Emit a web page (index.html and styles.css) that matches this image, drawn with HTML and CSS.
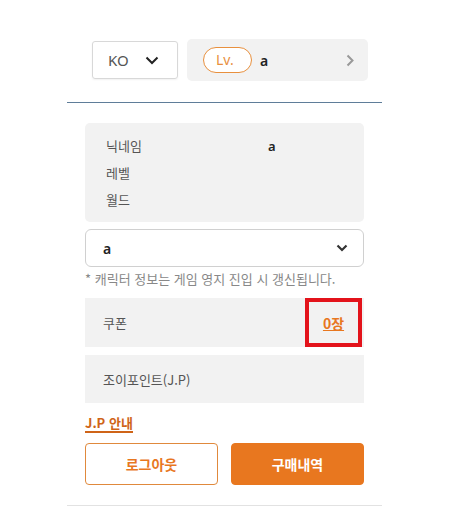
FILE: index.html
```html
<!DOCTYPE html>
<html lang="ko">
<head>
<meta charset="utf-8">
<link rel="stylesheet" href="styles.css">
</head>
<body>
<div class="panel">
  <div class="top">
    <div class="lang">
      <span class="lang-code">KO</span>
      <svg class="lang-caret" width="14" height="9" viewBox="0 0 14 9"><path d="M1.5 1.5 L7 7 L12.5 1.5" fill="none" stroke="#222" stroke-width="2"/></svg>
    </div>
    <div class="lv">
      <span class="lv-pill">Lv.</span>
      <span class="lv-name">a</span>
      <svg class="lv-arrow" width="8" height="13" viewBox="0 0 8 13"><path d="M1.5 1.5 L6.5 6.5 L1.5 11.5" fill="none" stroke="#999" stroke-width="2"/></svg>
    </div>
  </div>
  <div class="divider"></div>
  <div class="content">
    <div class="info">
      <div class="info-label">닉네임</div><div class="info-value">a</div>
      <div class="info-label">레벨</div><div class="info-value"></div>
      <div class="info-label">월드</div><div class="info-value"></div>
    </div>
    <div class="select">
      <span class="select-text">a</span>
      <svg class="select-caret" width="12" height="8" viewBox="0 0 12 8"><path d="M1.5 1.5 L6 6 L10.5 1.5" fill="none" stroke="#333" stroke-width="2.2"/></svg>
    </div>
    <p class="note">* 캐릭터 정보는 게임 영지 진입 시 갱신됩니다.</p>
    <div class="row coupon">
      <span class="row-label">쿠폰</span>
      <span class="coupon-count"><a class="coupon-link">0장</a></span>
    </div>
    <div class="row jp">
      <span class="row-label">조이포인트(J.P)</span>
    </div>
    <a class="jp-guide">J.P 안내</a>
    <div class="buttons">
      <button class="btn btn-outline">로그아웃</button>
      <button class="btn btn-fill">구매내역</button>
    </div>
  </div>
  <div class="divider-bottom"></div>
</div>
</body>
</html>
```

FILE: styles.css
```css
* { box-sizing: border-box; }
body {
  margin: 0;
  background: #fff;
  font-family: "Noto Sans CJK KR", "Noto Sans", sans-serif;
  color: #333;
}
.panel {
  width: 315px;
  margin-left: 67px;
}
.top {
  display: flex;
  align-items: center;
  gap: 9px;
  padding: 39px 0 0 25px;
}
.lang {
  width: 86px;
  height: 38px;
  border: 1px solid #d8d8d8;
  border-radius: 3px;
  display: flex;
  align-items: center;
  justify-content: space-between;
  padding: 0 18px 0 15px;
  box-shadow: 0 1px 2px rgba(0,0,0,0.06);
}
.lang-code {
  font-family: "Noto Sans", sans-serif;
  font-size: 15px;
  color: #555;
}
.lv {
  width: 181px;
  height: 42px;
  background: #f2f2f2;
  border-radius: 5px;
  display: flex;
  align-items: center;
  padding: 0 14px 0 16px;
}
.lv-pill {
  width: 49px;
  height: 26px;
  border: 1px solid #e8903e;
  border-radius: 13px;
  background: #fff;
  color: #e8903e;
  font-family: "Noto Sans", sans-serif;
  font-size: 14px;
  line-height: 24px;
  padding-left: 12px;
}
.lv-name {
  margin-left: 8px;
  font-family: "Noto Sans", sans-serif;
  font-size: 14px;
  font-weight: 600;
  color: #222;
  flex: 1;
}
.divider {
  height: 1px;
  background: #5f7d99;
  margin-top: 21px;
}
.content {
  padding: 0 18px;
}
.info {
  margin-top: 20px;
  background: #f2f2f2;
  border-radius: 5px;
  padding: 9px 0 9px 21px;
  display: grid;
  grid-template-columns: 162px 1fr;
  grid-auto-rows: 27px;
  align-items: center;
}
.info-label {
  font-size: 13px;
  color: #555;
}
.info-value {
  font-family: "Noto Sans", sans-serif;
  font-size: 13px;
  font-weight: 600;
  color: #222;
}
.select {
  margin-top: 7px;
  height: 38px;
  border: 1px solid #d0d0d0;
  border-radius: 6px;
  display: flex;
  align-items: center;
  justify-content: space-between;
  padding: 0 15px 0 17px;
}
.select-text {
  font-family: "Noto Sans", sans-serif;
  font-size: 14px;
  font-weight: 600;
  color: #222;
}
.note {
  margin: 2px 0 0;
  font-size: 13px;
  line-height: 20px;
  color: #888;
}
.row {
  background: #f2f2f2;
  display: flex;
  align-items: center;
  padding-left: 18px;
}
.coupon {
  margin-top: 9px;
  height: 49px;
  justify-content: space-between;
}
.coupon-count {
  width: 57px;
  height: 49px;
  margin-right: 2px;
  border: 4px solid #e3131b;
  display: flex;
  align-items: center;
  justify-content: center;
}
.coupon-link {
  color: #e8771f;
  font-size: 14px;
  font-weight: 700;
  text-decoration: underline;
}
.jp {
  margin-top: 8px;
  height: 48px;
}
.row-label {
  font-size: 13px;
  color: #555;
}
.jp-guide {
  display: inline-block;
  margin-top: 12px;
  font-size: 13px;
  font-weight: 700;
  line-height: 16px;
  color: #cf6418;
  border-bottom: 2px solid #cf6418;
}
.buttons {
  display: flex;
  gap: 13px;
  margin-top: 10px;
}
.btn {
  flex: 1;
  height: 42px;
  border-radius: 4px;
  font-family: "Noto Sans CJK KR", sans-serif;
  font-size: 14px;
  font-weight: 700;
  cursor: pointer;
}
.btn-outline {
  background: #fff;
  border: 1px solid #e0893c;
  color: #e8771f;
}
.btn-fill {
  background: #e8771f;
  border: 1px solid #e8771f;
  color: #fff;
}
.divider-bottom {
  height: 1px;
  background: #e2e2e2;
  margin-top: 20px;
}
```
